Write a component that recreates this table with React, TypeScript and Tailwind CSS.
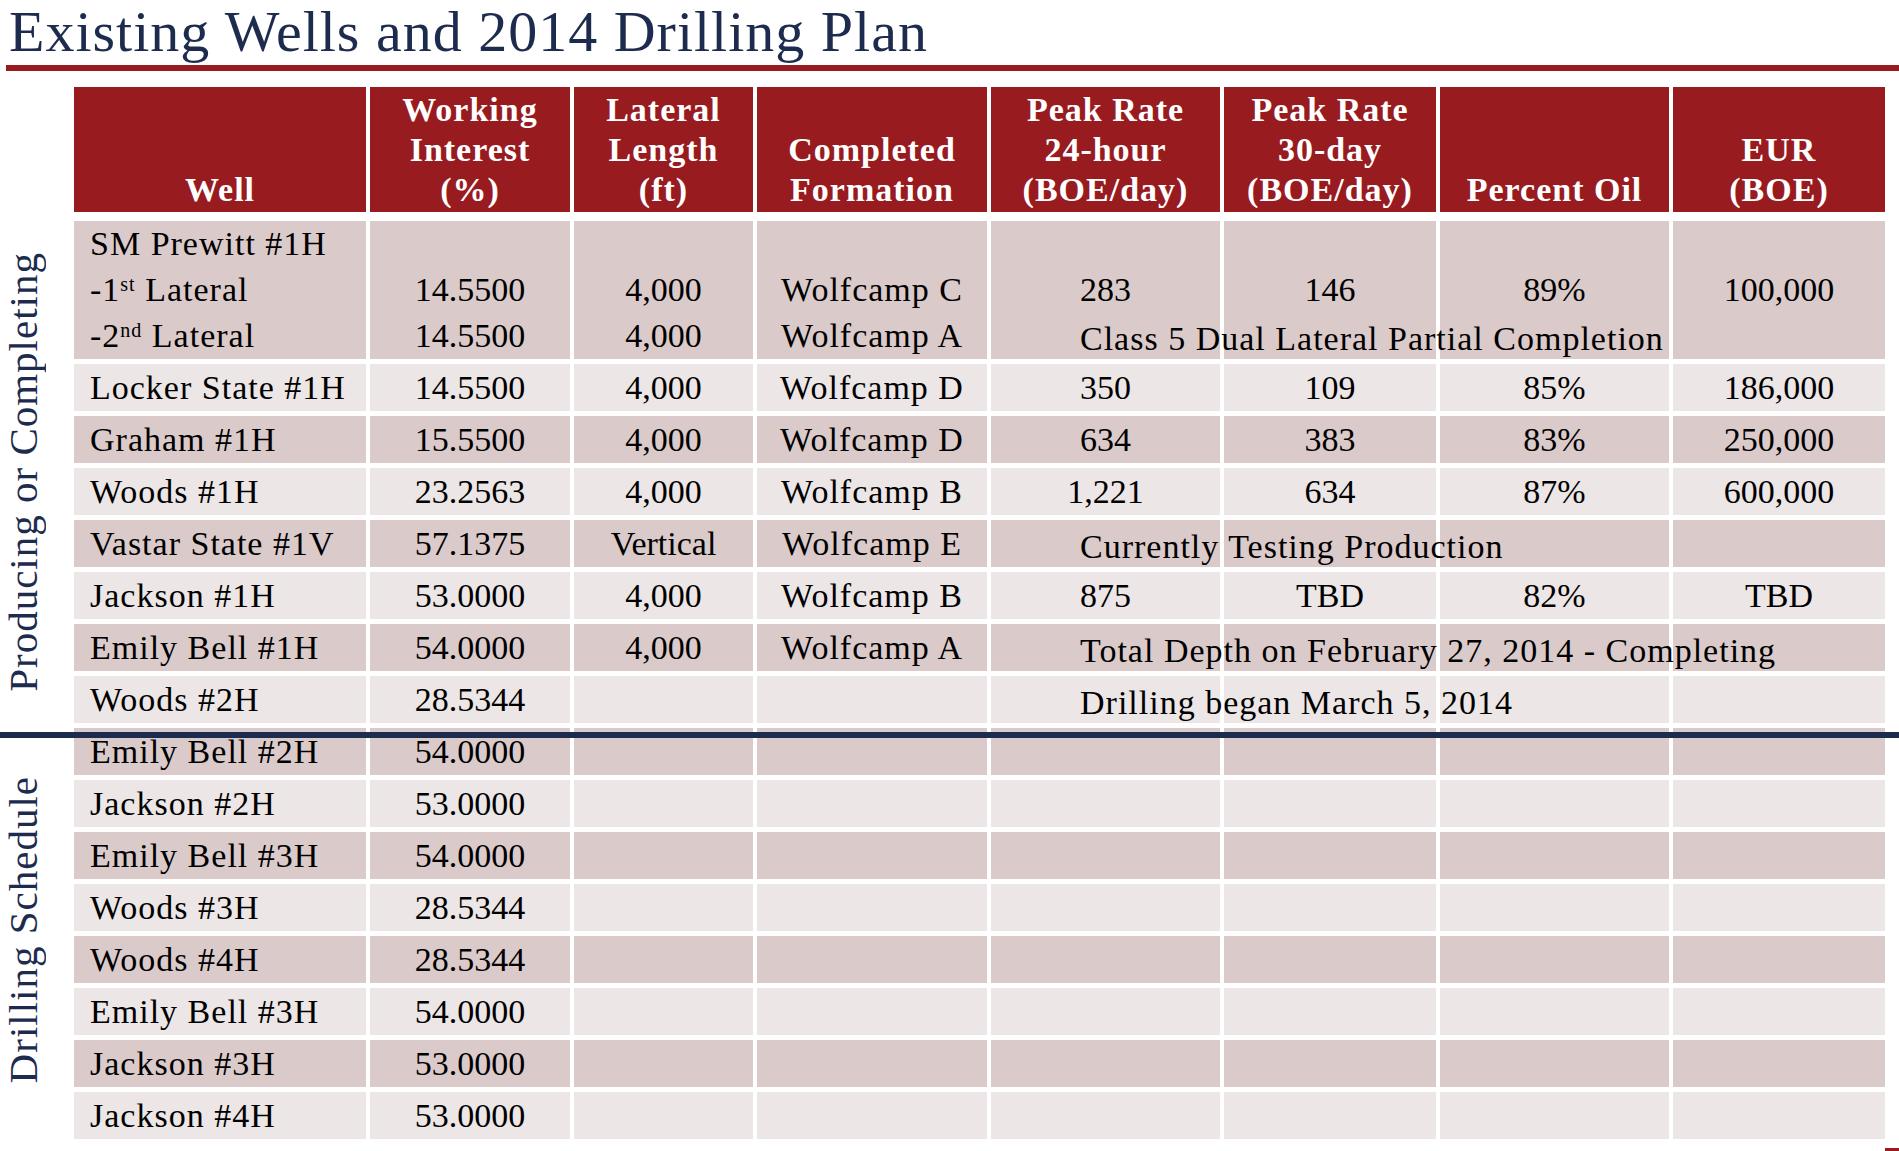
import React from 'react';

const COLS = 'grid grid-cols-[292px_200px_179px_230px_229px_212px_229px_212px] gap-x-[4px]';
const DARK = 'bg-[#dbcaca]';
const LIGHT = 'bg-[#ece6e6]';

type Row = { cells: string[]; note?: string };

const headers: string[][] = [
  ['Well'],
  ['Working', 'Interest', '(%)'],
  ['Lateral', 'Length', '(ft)'],
  ['Completed', 'Formation'],
  ['Peak Rate', '24-hour', '(BOE/day)'],
  ['Peak Rate', '30-day', '(BOE/day)'],
  ['Percent Oil'],
  ['EUR', '(BOE)'],
];

const producing: Row[] = [
  { cells: ['Locker State #1H', '14.5500', '4,000', 'Wolfcamp D', '350', '109', '85%', '186,000'] },
  { cells: ['Graham #1H', '15.5500', '4,000', 'Wolfcamp D', '634', '383', '83%', '250,000'] },
  { cells: ['Woods #1H', '23.2563', '4,000', 'Wolfcamp B', '1,221', '634', '87%', '600,000'] },
  { cells: ['Vastar State #1V', '57.1375', 'Vertical', 'Wolfcamp E', '', '', '', ''], note: 'Currently Testing Production' },
  { cells: ['Jackson #1H', '53.0000', '4,000', 'Wolfcamp B', '875', 'TBD', '82%', 'TBD'] },
  { cells: ['Emily Bell #1H', '54.0000', '4,000', 'Wolfcamp A', '', '', '', ''], note: 'Total Depth on February 27, 2014 - Completing' },
  { cells: ['Woods #2H', '28.5344', '', '', '', '', '', ''], note: 'Drilling began March 5, 2014' },
];

const schedule: [string, string][] = [
  ['Emily Bell #2H', '54.0000'],
  ['Jackson #2H', '53.0000'],
  ['Emily Bell #3H', '54.0000'],
  ['Woods #3H', '28.5344'],
  ['Woods #4H', '28.5344'],
  ['Emily Bell #3H', '54.0000'],
  ['Jackson #3H', '53.0000'],
  ['Jackson #4H', '53.0000'],
];

function Note({ text }: { text: string }) {
  return (
    <span className="relative z-10 whitespace-nowrap pl-[89px] pt-[5px] tracking-[1px]">{text}</span>
  );
}

function Cell({ i, value }: { i: number; value: string }) {
  if (i === 0) return <div className="pl-4 tracking-[1px] whitespace-nowrap">{value}</div>;
  if (i === 3) return <div className="text-center tracking-[1px] whitespace-nowrap">{value}</div>;
  return <div className="text-center whitespace-nowrap">{value}</div>;
}

function DataRow({ row, dark }: { row: Row; dark: boolean }) {
  const bg = dark ? DARK : LIGHT;
  return (
    <div className={COLS}>
      {row.cells.map((c, i) => (
        <div key={i} className={`${bg} h-[47px] flex items-center leading-[47px]`}>
          {row.note && i === 4 ? (
            <Note text={row.note} />
          ) : (
            <div className="w-full">
              <Cell i={i} value={c} />
            </div>
          )}
        </div>
      ))}
    </div>
  );
}

function PrewittRow() {
  const cols: React.ReactNode[][] = [
    [
      'SM Prewitt #1H',
      <span>-1<sup className="text-[20px]">st</sup> Lateral</span>,
      <span>-2<sup className="text-[20px]">nd</sup> Lateral</span>,
    ],
    ['', '14.5500', '14.5500'],
    ['', '4,000', '4,000'],
    ['', 'Wolfcamp C', 'Wolfcamp A'],
    ['', '283', <Note text="Class 5 Dual Lateral Partial Completion" />],
    ['', '146', ''],
    ['', '89%', ''],
    ['', '100,000', ''],
  ];
  return (
    <div className={COLS}>
      {cols.map((lines, i) => (
        <div key={i} className={`${DARK} h-[138px] flex flex-col leading-[46px]`}>
          {lines.map((l, j) => (
            <div
              key={j}
              className={`h-[46px] flex items-center whitespace-nowrap ${
                i === 0 ? 'pl-4 tracking-[1px]' : i === 4 && j === 2 ? 'justify-start' : 'justify-center'
              } ${i === 3 ? 'tracking-[1px]' : ''}`}
            >
              {l}
            </div>
          ))}
        </div>
      ))}
    </div>
  );
}

function SideLabel({ text }: { text: string }) {
  return (
    <span className="[writing-mode:vertical-rl] rotate-180 whitespace-nowrap text-[41px] leading-[46px] tracking-[1px] text-[#1d2c4e]">
      {text}
    </span>
  );
}

export default function App() {
  return (
    <div className="relative w-[1899px] h-[1151px] overflow-hidden bg-white font-['Liberation_Serif',serif] text-black">
      <div className="h-[65px] pl-[9px] text-[58px] leading-[64px] tracking-[1px] text-[#1d2c4e] whitespace-nowrap">
        Existing Wells and 2014 Drilling Plan
      </div>
      <div className="ml-[6px] h-[6px] bg-[#981b20]" />

      <div className="mt-[16px] flex">
        <div className="w-[74px] shrink-0 pt-[134px] flex flex-col gap-[5px]">
          <div className="h-[502px] flex items-center">
            <SideLabel text="Producing or Completing" />
          </div>
          <div className="h-[411px] flex items-center pb-[8px]">
            <SideLabel text="Drilling Schedule" />
          </div>
        </div>

        <div className="text-[34px]">
          <div className={COLS}>
            {headers.map((lines, i) => (
              <div
                key={i}
                className="h-[125px] bg-[#981b20] flex flex-col justify-end items-center pb-[2px] text-white font-bold leading-[40px] tracking-[1px] whitespace-nowrap"
              >
                {lines.map((l) => (
                  <div key={l}>{l}</div>
                ))}
              </div>
            ))}
          </div>

          <div className="mt-[9px] flex flex-col gap-[5px]">
            <PrewittRow />
            {producing.map((r, i) => (
              <DataRow key={i} row={r} dark={i % 2 === 1} />
            ))}
            {schedule.map(([name, wi], i) => (
              <DataRow key={'s' + i} row={{ cells: [name, wi, '', '', '', '', '', ''] }} dark={i % 2 === 0} />
            ))}
          </div>
        </div>
      </div>

      <div className="mt-[9px] ml-auto h-[3px] w-[14px] bg-[#981b20]" />

      <div className="absolute left-0 right-0 top-[732px] h-[6px] bg-[#1d2c4e]" />
    </div>
  );
}
